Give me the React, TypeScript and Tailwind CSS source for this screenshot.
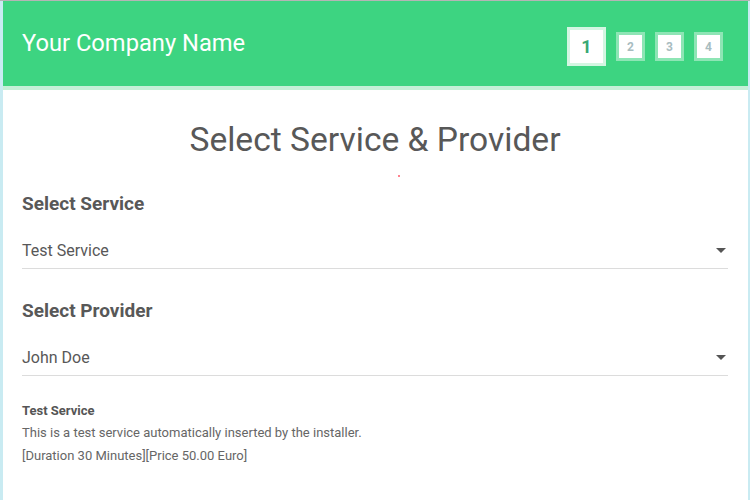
const steps = [1, 2, 3, 4];

const Caret = () => (
  <svg width="10" height="6" viewBox="0 0 10 6" className="fill-[#555]">
    <path d="M0 0h10L5 5z" />
  </svg>
);

export default function App() {
  return (
    <div className="w-[750px] h-[500px] overflow-hidden bg-[#c9ebf2] border-t border-[#b5b5b5] pl-[3px] pr-[2px] font-['Roboto',sans-serif]">
      <div className="h-full bg-white">
        <div className="h-[89px] bg-[#3dd481] border-b-4 border-[#c4f0d7] flex items-center justify-between pl-[19px] pr-[25px]">
          <h1 className="text-white text-[23.7px] leading-none">Your Company Name</h1>
          <div className="flex items-center gap-[10px] mt-[6px]">
            {steps.map((s) =>
              s === 1 ? (
                <div
                  key={s}
                  className="w-[39px] h-[39px] bg-white border-[3px] border-[#d4f6e2] flex items-center justify-center text-[18px] font-bold text-[#3aa873]"
                >
                  {s}
                </div>
              ) : (
                <div
                  key={s}
                  className="w-[29px] h-[29px] bg-white border-[3px] border-[#8ee5b5] flex items-center justify-center text-[12px] font-bold text-[#a8bcbf]"
                >
                  {s}
                </div>
              )
            )}
          </div>
        </div>

        <div className="pl-[19px] pr-[20px]">
          <h2 className="text-center text-[33.6px] text-[#585858] mt-[33px] leading-none">Select Service &amp; Provider</h2>
          <div className="flex mt-[18px] pl-[376px]">
            <div className="w-[2px] h-[2px] rounded-full bg-[#ff5a6a]" />
          </div>

          <h3 className="mt-[17px] text-[19px] font-bold text-[#585858] leading-none">Select Service</h3>
          <div className="mt-[27px] h-[29px] border-b border-[#dcdcdc] flex items-center justify-between pr-[2px]">
            <span className="text-[16px] text-[#585858] mb-[6px]">Test Service</span>
            <span className="mb-[6px]"><Caret /></span>
          </div>

          <h3 className="mt-[32px] text-[19px] font-bold text-[#585858] leading-none">Select Provider</h3>
          <div className="mt-[27px] h-[29px] border-b border-[#dcdcdc] flex items-center justify-between pr-[2px]">
            <span className="text-[16px] text-[#585858] mb-[6px]">John Doe</span>
            <span className="mb-[6px]"><Caret /></span>
          </div>

          <div className="mt-[24px] text-[13px] leading-[22.5px] text-[#666]">
            <div className="font-bold text-[#555]">Test Service</div>
            <div>This is a test service automatically inserted by the installer.</div>
            <div>[Duration 30 Minutes][Price 50.00 Euro]</div>
          </div>
        </div>
      </div>
    </div>
  );
}
